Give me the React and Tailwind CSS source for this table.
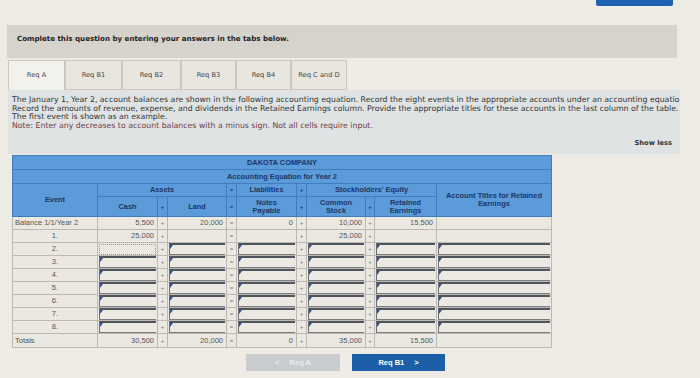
const tabs = [
	{ label: 'Req A', w: 'w-[57px]', active: true },
	{ label: 'Req B1', w: 'w-[57px]' },
	{ label: 'Req B2', w: 'w-[59px]' },
	{ label: 'Req B3', w: 'w-[55px]' },
	{ label: 'Req B4', w: 'w-[55px]' },
	{ label: 'Req C and D', w: 'w-[56px]' },
]

const ops = ['+', '=', '+', '+']

// values: [cash, land, notes, common, retained]; 'in' = input, 'dot' = empty dotted cell
const rows = [
	{ event: 'Balance 1/1/Year 2', left: true, vals: ['5,500', '20,000', '0', '10,000', '15,500'], title: 'plain' },
	{ event: '1.', vals: ['25,000', '', '', '25,000', ''], title: 'plain' },
	{ event: '2.', vals: ['dot', 'in', 'in', 'in', 'in'], title: 'in' },
	{ event: '3.', vals: ['in', 'in', 'in', 'in', 'in'], title: 'in' },
	{ event: '4.', vals: ['in', 'in', 'in', 'in', 'in'], title: 'in' },
	{ event: '5.', vals: ['in', 'in', 'in', 'in', 'in'], title: 'in' },
	{ event: '6.', vals: ['in', 'in', 'in', 'in', 'in'], title: 'in' },
	{ event: '7.', vals: ['in', 'in', 'in', 'in', 'in'], title: 'in' },
	{ event: '8.', vals: ['in', 'in', 'in', 'in', 'in'], title: 'in' },
]

const totals = ['30,500', '20,000', '0', '35,000', '15,500']

const InputBox = () => (
	<div className="relative h-[12px] border-t-2 border-b border-l border-t-[#50545c] border-b-[#7a7c80] border-l-[#6a6e76] bg-[#ece9e2]">
		<span className="absolute left-0 top-0 h-0 w-0 border-t-[4px] border-r-[3px] border-t-[#2b4f9a] border-r-transparent" />
	</div>
)

const ValueCell = ({ v }) => {
	if (v === 'in') {
		return (
			<td className="border border-[#bcb9b2] p-0 px-[1px]">
				<InputBox />
			</td>
		)
	}
	if (v === 'dot') {
		return (
			<td className="border border-[#bcb9b2] p-0 px-[1px]">
				<div className="h-[11px] border border-dotted border-[#9a9893]" />
			</td>
		)
	}
	return (
		<td className="border border-[#bcb9b2] pr-[3px] text-right text-[#555] leading-none">{v}</td>
	)
}

const OpCell = ({ op }) => (
	<td className="border border-[#bcb9b2] text-center text-[6px] text-[#777] leading-none">{op}</td>
)

const HeadCell = ({ children, className = '', ...props }) => (
	<th className={`border border-[#3f7dbf] bg-[#5b9bd9] p-0 font-bold text-[#1c3768] leading-[8px] ${className}`} {...props}>
		{children}
	</th>
)

const App = () => {
	return (
		<div className="w-[700px] h-[378px] overflow-hidden bg-[#eeebe5] font-['DejaVu_Sans',sans-serif] text-[#333]">
			<div className="flex h-[25px] justify-end pr-[27px]">
				<div className="mt-[-14px] h-[20px] w-[77px] rounded-[2px] bg-[#1f60b5]" />
			</div>

			<div className="ml-[7px] h-[33px] w-[670px] bg-[#d6d3cc] pl-[10px] pt-[9px] text-[7.1px] font-bold text-[#222]">
				Complete this question by entering your answers in the tabs below.
			</div>

			<div className="ml-[8px] mt-[2px] flex h-[30px]">
				{tabs.map((t) => (
					<div
						key={t.label}
						className={`${t.w} flex items-center justify-center border border-[#cbc8c1] text-[6.7px] text-[#444] ${t.active ? 'bg-[#f3f1ec] border-b-0' : 'bg-[#e9e6e0]'}`}
					>
						{t.label}
					</div>
				))}
			</div>

			<div className="ml-[8px] h-[64px] w-[672px] overflow-hidden bg-[#e0e3e3] pl-[4px] pt-[6px] text-[7.8px] leading-[8.7px] text-[#333]">
				<div className="whitespace-nowrap">
					The January 1, Year 2, account balances are shown in the following accounting equation. Record the eight events in the appropriate accounts under an accounting equation.
				</div>
				<div className="whitespace-nowrap">
					Record the amounts of revenue, expense, and dividends in the Retained Earnings column. Provide the appropriate titles for these accounts in the last column of the table.
				</div>
				<div className="whitespace-nowrap">The first event is shown as an example.</div>
				<div className="whitespace-nowrap text-[#6e3b46]">
					Note: Enter any decreases to account balances with a minus sign. Not all cells require input.
				</div>
				<div className="mt-[8px] pr-[8px] text-right text-[6.7px] leading-[8px] font-bold text-[#333]">Show less</div>
			</div>

			<table className="ml-[12px] mt-[1px] table-fixed border-collapse font-['Liberation_Sans',sans-serif] text-[7.5px]">
				<colgroup>
					<col className="w-[85px]" />
					<col className="w-[60px]" />
					<col className="w-[10px]" />
					<col className="w-[59px]" />
					<col className="w-[10px]" />
					<col className="w-[60px]" />
					<col className="w-[10px]" />
					<col className="w-[59px]" />
					<col className="w-[9px]" />
					<col className="w-[62px]" />
					<col className="w-[115px]" />
				</colgroup>
				<thead className="text-[7.4px]">
					<tr className="h-[14px]">
						<HeadCell colSpan={11}>DAKOTA COMPANY</HeadCell>
					</tr>
					<tr className="h-[14px]">
						<HeadCell colSpan={11}>Accounting Equation for Year 2</HeadCell>
					</tr>
					<tr className="h-[13px]">
						<HeadCell rowSpan={2}>Event</HeadCell>
						<HeadCell colSpan={3}>Assets</HeadCell>
						<HeadCell className="text-[6px]">=</HeadCell>
						<HeadCell>Liabilities</HeadCell>
						<HeadCell className="text-[6px]">+</HeadCell>
						<HeadCell colSpan={3}>Stockholders' Equity</HeadCell>
						<HeadCell rowSpan={2} className="px-[6px]">Account Titles for Retained Earnings</HeadCell>
					</tr>
					<tr className="h-[20px]">
						<HeadCell>Cash</HeadCell>
						<HeadCell className="text-[6px]">+</HeadCell>
						<HeadCell>Land</HeadCell>
						<HeadCell className="text-[6px]">=</HeadCell>
						<HeadCell>Notes<br />Payable</HeadCell>
						<HeadCell className="text-[6px]">+</HeadCell>
						<HeadCell>Common<br />Stock</HeadCell>
						<HeadCell className="text-[6px]">+</HeadCell>
						<HeadCell>Retained<br />Earnings</HeadCell>
					</tr>
				</thead>
				<tbody className="bg-[#ebe8e1]">
					{rows.map((r) => (
						<tr key={r.event} className="h-[13px]">
							<td className={`border border-[#bcb9b2] leading-none text-[#555] ${r.left ? 'pl-[2px] text-left' : 'text-center'}`}>
								{r.event}
							</td>
							<ValueCell v={r.vals[0]} />
							<OpCell op={ops[0]} />
							<ValueCell v={r.vals[1]} />
							<OpCell op={ops[1]} />
							<ValueCell v={r.vals[2]} />
							<OpCell op={ops[2]} />
							<ValueCell v={r.vals[3]} />
							<OpCell op={ops[3]} />
							<ValueCell v={r.vals[4]} />
							<ValueCell v={r.title === 'in' ? 'in' : ''} />
						</tr>
					))}
					<tr className="h-[14px]">
						<td className="border border-[#bcb9b2] pl-[2px] text-left leading-none text-[#555]">Totals</td>
						<ValueCell v={totals[0]} />
						<OpCell op="+" />
						<ValueCell v={totals[1]} />
						<OpCell op="=" />
						<ValueCell v={totals[2]} />
						<OpCell op="+" />
						<ValueCell v={totals[3]} />
						<OpCell op="+" />
						<ValueCell v={totals[4]} />
						<ValueCell v="" />
					</tr>
				</tbody>
			</table>

			<div className="ml-[246px] mt-[6px] flex gap-[12px] font-['Liberation_Sans',sans-serif] text-[7.5px] font-bold">
				<button className="flex h-[17px] w-[94px] items-center justify-center gap-[10px] bg-[#c8ccce] text-[#e9ecee]">
					<span>&lt;</span>
					<span>Req A</span>
				</button>
				<button className="flex h-[17px] w-[93px] items-center justify-center gap-[10px] bg-[#1d5ea8] text-white">
					<span>Req B1</span>
					<span>&gt;</span>
				</button>
			</div>
		</div>
	)
}

export default App
